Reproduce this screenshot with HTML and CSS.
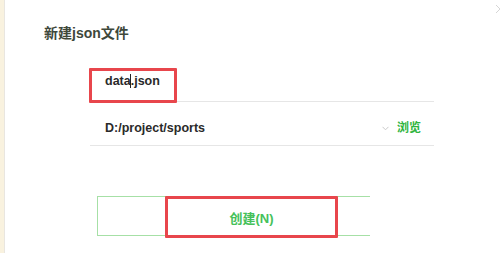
FILE: index.html
```html
<!DOCTYPE html>
<html>
<head>
<meta charset="utf-8">
<link rel="stylesheet" href="styles.css">
</head>
<body>
<div class="app">
  <div class="edge"></div>
  <div class="dialog">
    <svg class="close" width="10" height="10" viewBox="0 0 10 10"><path d="M1 1L9 9M9 1L1 9" stroke="#d6d6d6" stroke-width="1"/></svg>
    <div class="title">新建json文件</div>
    <div class="form">
      <div class="row row-name">
        <span class="value">data<span class="caret"></span>.json</span>
        <span class="mark mark-name"></span>
      </div>
      <div class="row row-path">
        <span class="value">D:/project/sports</span>
        <span class="tools">
          <svg class="chev" width="7" height="5" viewBox="0 0 7 5"><path d="M0.5 0.8L3.5 3.8L6.5 0.8" fill="none" stroke="#c9c9c9" stroke-width="1"/></svg>
          <span class="browse">浏览</span>
        </span>
      </div>
    </div>
    <div class="actions">
      <div class="btn-outline"></div>
      <div class="btn-create">创建(N)</div>
    </div>
  </div>
</div>
</body>
</html>
```
FILE: styles.css
```css
html, body {
  margin: 0;
  padding: 0;
  background: #ffffff;
}
body {
  font-family: "Liberation Sans", "Noto Sans CJK SC", sans-serif;
}
.app {
  display: flex;
  width: 500px;
  height: 253px;
  overflow: hidden;
}
.edge {
  width: 4px;
  background: #f9f2df;
  border-right: 1px solid #e9e6e0;
  flex: none;
}
.dialog {
  position: relative;
  flex: 1;
  padding: 24px 0 0 39px;
}
.close {
  position: absolute;
  top: 4px;
  right: -5px;
}
.title {
  font-size: 14px;
  font-weight: bold;
  line-height: 18px;
  color: #3e483b;
}
.form {
  margin: 26px 0 0 46px;
  width: 344px;
}
.row {
  position: relative;
  display: flex;
  align-items: flex-start;
  justify-content: space-between;
  border-bottom: 1px solid #e6e6e6;
  font-size: 12.5px;
  font-weight: bold;
  line-height: 18px;
  color: #2a2a2a;
}
.row .value {
  padding-left: 15px;
}
.row-name {
  height: 29px;
  padding-top: 4px;
}
.row-path {
  height: 26px;
  padding-top: 17px;
}
.caret {
  display: inline-block;
  width: 1px;
  height: 14px;
  background: #222;
  vertical-align: -3px;
  margin: 0 -0.5px;
}
.mark {
  position: absolute;
  border: 3px solid #e8464c;
  border-radius: 1px;
}
.mark-name {
  left: -1px;
  top: 0;
  width: 82px;
  height: 29px;
}
.tools {
  display: flex;
  align-items: center;
  gap: 8px;
  padding-right: 13px;
}
.chev {
  display: block;
  margin-top: 1px;
}
.browse {
  color: #30b53e;
  font-size: 12px;
  font-weight: bold;
}
.actions {
  position: relative;
  margin: 50px 0 0 53px;
  width: 273px;
  height: 40px;
}
.btn-outline {
  box-sizing: border-box;
  width: 273px;
  height: 40px;
  border: 1px solid #a6e0a6;
  border-right: none;
}
.btn-create {
  position: absolute;
  left: 68px;
  top: 0;
  box-sizing: border-box;
  width: 173px;
  height: 42px;
  border: 3px solid #e8464c;
  border-radius: 1px;
  display: flex;
  align-items: center;
  justify-content: center;
  font-size: 13px;
  font-weight: bold;
  color: #45c15a;
}
```
